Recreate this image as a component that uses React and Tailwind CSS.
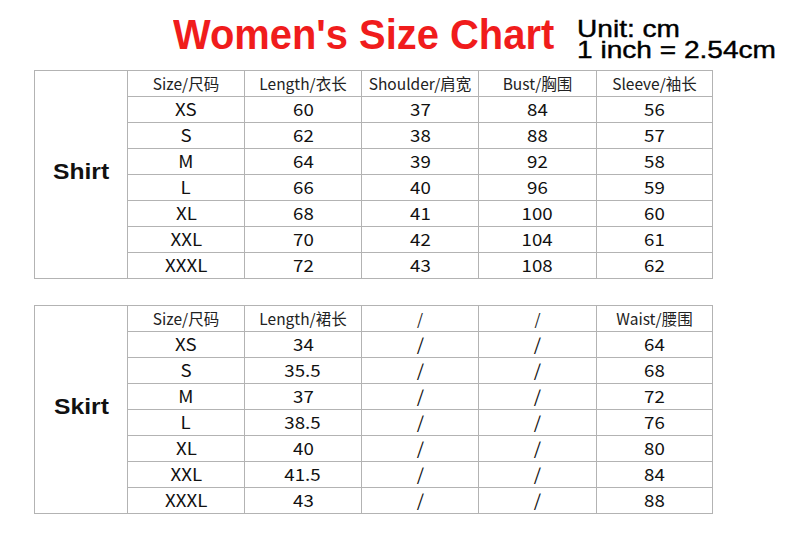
const shirt = {
  label: 'Shirt',
  head: ['Size/尺码', 'Length/衣长', 'Shoulder/肩宽', 'Bust/胸围', 'Sleeve/袖长'],
  rows: [
    ['XS', '60', '37', '84', '56'],
    ['S', '62', '38', '88', '57'],
    ['M', '64', '39', '92', '58'],
    ['L', '66', '40', '96', '59'],
    ['XL', '68', '41', '100', '60'],
    ['XXL', '70', '42', '104', '61'],
    ['XXXL', '72', '43', '108', '62'],
  ],
}

const skirt = {
  label: 'Skirt',
  head: ['Size/尺码', 'Length/裙长', '/', '/', 'Waist/腰围'],
  rows: [
    ['XS', '34', '/', '/', '64'],
    ['S', '35.5', '/', '/', '68'],
    ['M', '37', '/', '/', '72'],
    ['L', '38.5', '/', '/', '76'],
    ['XL', '40', '/', '/', '80'],
    ['XXL', '41.5', '/', '/', '84'],
    ['XXXL', '43', '/', '/', '88'],
  ],
}

const cellFont = { fontFamily: '"Noto Sans CJK SC", "Noto Sans", sans-serif' }

function SizeTable({ data }) {
  return (
    <div className="grid w-[679px] grid-cols-[93px_117px_117px_117px_118px_116px] grid-rows-[repeat(8,26px)] border-l border-t border-[#b3b3b3]">
      <div className="row-span-8 flex items-center justify-center border-b border-r border-[#b3b3b3]">
        <span className="inline-block -translate-y-[3px] scale-x-[1.12] font-['Liberation_Sans',Arial,sans-serif] text-[22px] font-bold text-[#111]">
          {data.label}
        </span>
      </div>
      {data.head.map((h, i) => (
        <div
          key={'h' + i}
          style={cellFont}
          className="flex items-center justify-center border-b border-r border-[#b3b3b3] text-[15.5px] leading-none text-[#222]"
        >
          {h}
        </div>
      ))}
      {data.rows.map((row, r) =>
        row.map((c, i) => (
          <div
            key={r + '-' + i}
            style={cellFont}
            className="flex items-center justify-center border-b border-r border-[#b3b3b3] text-[17px] leading-none text-[#111]"
          >
            <span className="inline-block -translate-y-[1px] scale-x-[1.1]">{c}</span>
          </div>
        ))
      )}
    </div>
  )
}

export default function App() {
  return (
    <div className="h-[557px] w-[790px] bg-white pl-[34px]">
      <div className="flex h-[70px] items-start pt-[12px]">
        <h1 className="ml-[139px] inline-block origin-left scale-x-[0.95] font-['Liberation_Sans',Arial,sans-serif] text-[42px] font-bold leading-[46px] text-[#f01c1c]">
          Women's Size Chart
        </h1>
        <div className="ml-[3px] pt-[6px] font-['Liberation_Sans',Arial,sans-serif] text-[24px] leading-[21px] text-black [-webkit-text-stroke:0.4px_#000]">
          <div className="origin-left scale-x-[1.17]">Unit: cm</div>
          <div className="origin-left scale-x-[1.17]">1 inch = 2.54cm</div>
        </div>
      </div>
      <SizeTable data={shirt} />
      <div className="h-[26px]" />
      <SizeTable data={skirt} />
    </div>
  )
}
